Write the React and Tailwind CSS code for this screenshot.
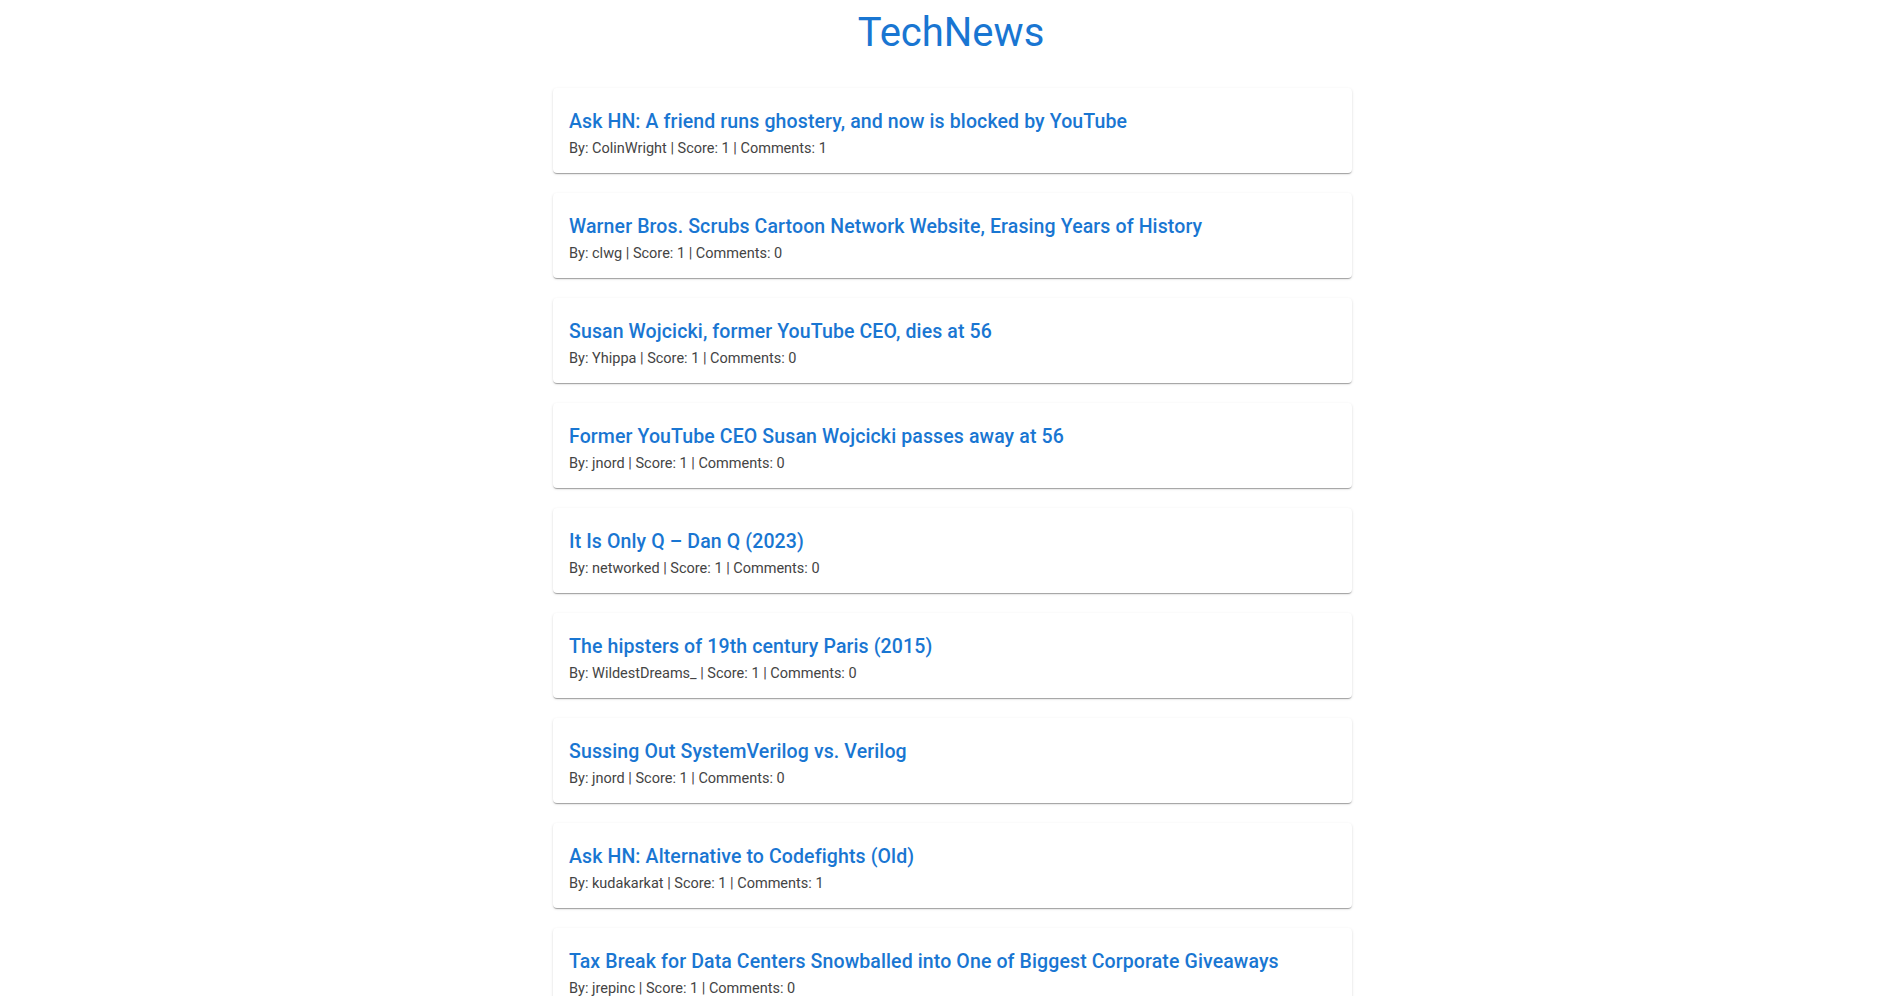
import React from "react";

const stories = [
  { title: "Ask HN: A friend runs ghostery, and now is blocked by YouTube", by: "ColinWright", score: 1, comments: 1 },
  { title: "Warner Bros. Scrubs Cartoon Network Website, Erasing Years of History", by: "clwg", score: 1, comments: 0 },
  { title: "Susan Wojcicki, former YouTube CEO, dies at 56", by: "Yhippa", score: 1, comments: 0 },
  { title: "Former YouTube CEO Susan Wojcicki passes away at 56", by: "jnord", score: 1, comments: 0 },
  { title: "It Is Only Q \u2013 Dan Q (2023)", by: "networked", score: 1, comments: 0 },
  { title: "The hipsters of 19th century Paris (2015)", by: "WildestDreams_", score: 1, comments: 0 },
  { title: "Sussing Out SystemVerilog vs. Verilog", by: "jnord", score: 1, comments: 0 },
  { title: "Ask HN: Alternative to Codefights (Old)", by: "kudakarkat", score: 1, comments: 1 },
  { title: "Tax Break for Data Centers Snowballed into One of Biggest Corporate Giveaways", by: "jrepinc", score: 1, comments: 0 },
  { title: "Show HN: A tiny tool for tracking tech news", by: "anon", score: 1, comments: 0 },
];

export default function App() {
  return (
    <div className="min-h-screen bg-white" style={{ fontFamily: "Roboto, 'Liberation Sans', sans-serif" }}>
      <div className="flex flex-col items-center pt-[9px]">
        <h1 className="text-[40px] leading-[48px] font-normal text-[#1976d2]">TechNews</h1>
        <div className="ml-[3px] mt-[31px] flex w-[799px] flex-col gap-5 pb-8">
          {stories.map((s, i) => (
            <div
              key={i}
              className="rounded-[4px] bg-white px-4 pt-[20px] pb-[14px] shadow-[0px_2px_1px_-1px_rgba(0,0,0,0.2),0px_1px_1px_0px_rgba(0,0,0,0.14),0px_1px_3px_0px_rgba(0,0,0,0.12)]"
            >
              <a href="#" className="mb-[3px] block text-[19.5px] leading-[28px] font-medium tracking-[0.12px] text-[#1976d2]">
                {s.title}
              </a>
              <p className="text-[14.5px] leading-[20px] text-[#444]">
                By: {s.by} | Score: {s.score} | Comments: {s.comments}
              </p>
            </div>
          ))}
        </div>
      </div>
    </div>
  );
}
